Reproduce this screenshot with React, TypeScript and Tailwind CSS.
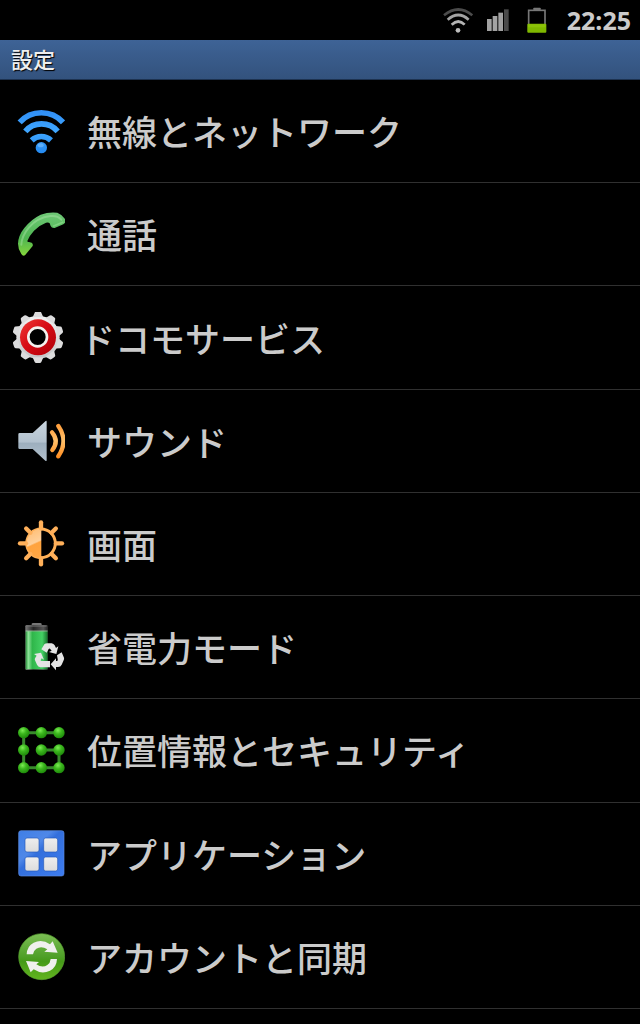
import type { ReactNode } from 'react';

function WifiIcon() {
  return (
    <svg viewBox="51 199 144 144" className="size-12" aria-hidden="true">
      <defs>
        <linearGradient id="wifi" x1="0" y1="205" x2="0" y2="340" gradientUnits="userSpaceOnUse">
          <stop offset="0" stopColor="#2f8df5" />
          <stop offset="0.5" stopColor="#3fa6ff" />
          <stop offset="1" stopColor="#2489f0" />
        </linearGradient>
      </defs>
      <g fill="none" stroke="url(#wifi)" strokeWidth="17">
        <path d="M59 245A88 88 0 0 1 189 245" />
        <path d="M76 272A64 64 0 0 1 173 272" />
        <path d="M95 299A42 42 0 0 1 153 299" />
      </g>
      <circle cx="124" cy="321" r="17" fill="url(#wifi)" />
      <ellipse cx="122" cy="314" rx="9" ry="6" fill="#8cc9ff" opacity="0.5" />
    </svg>
  );
}

function PhoneIcon() {
  return (
    <svg viewBox="51 45 144 144" className="size-12" aria-hidden="true">
      <defs>
        <linearGradient id="phone" x1="0" y1="52" x2="0" y2="182" gradientUnits="userSpaceOnUse">
          <stop offset="0" stopColor="#6fc877" />
          <stop offset="0.6" stopColor="#4fb552" />
          <stop offset="1" stopColor="#85d63c" />
        </linearGradient>
      </defs>
      <path
        d="M75 181Q68 184 64 177Q54 162 54 146Q55 121 73 99Q93 73 122 59Q146 50 172 53Q188 59 197 75Q198 83 190 88L164 99Q155 100 152 93L149 85Q146 81 138 83Q117 91 102 107Q88 122 82 138Q82 142 87 141L95 143Q100 147 98 153Z"
        fill="url(#phone)"
      />
      <path d="M64 149Q65 123 87 97Q112 68 151 63Q173 61 184 74" fill="none" stroke="#a5e2a2" strokeWidth="6" strokeLinecap="round" opacity="0.5" />
      <path d="M159 94L190 81" stroke="#9ce49a" strokeWidth="5" opacity="0.5" />
    </svg>
  );
}

const TEETH = [0, 36, 72, 108, 144, 180, 216, 252, 288, 324];

function DocomoIcon() {
  return (
    <svg viewBox="36 35 156 156" className="size-[52px]" aria-hidden="true">
      <defs>
        <linearGradient id="gear" x1="0" y1="33" x2="0" y2="189" gradientUnits="userSpaceOnUse">
          <stop offset="0" stopColor="#f6f6f6" />
          <stop offset="1" stopColor="#bfc1c3" />
        </linearGradient>
        <linearGradient id="ring" x1="60" y1="60" x2="160" y2="160" gradientUnits="userSpaceOnUse">
          <stop offset="0" stopColor="#ef3a36" />
          <stop offset="0.45" stopColor="#d80d16" />
          <stop offset="1" stopColor="#b40009" />
        </linearGradient>
      </defs>
      <circle cx="114" cy="111" r="65" fill="url(#gear)" />
      <g fill="#dcdcdd">
        {TEETH.map((angle) => (
          <path key={angle} d="M98 51L104 37Q105 34 109 34H119Q123 34 124 37L130 51Z" transform={`rotate(${angle} 114 111)`} />
        ))}
      </g>
      <circle cx="114" cy="111" r="54" fill="url(#ring)" />
      <circle cx="113" cy="110" r="28" fill="#000" stroke="#f4f1ee" strokeWidth="8" />
    </svg>
  );
}

function SoundIcon() {
  return (
    <svg viewBox="51 36 144 144" className="size-12" aria-hidden="true">
      <defs>
        <linearGradient id="speaker" x1="0" y1="48" x2="0" y2="168" gradientUnits="userSpaceOnUse">
          <stop offset="0" stopColor="#c9d5df" />
          <stop offset="0.52" stopColor="#b3c2cf" />
          <stop offset="0.56" stopColor="#9dafbe" />
          <stop offset="1" stopColor="#b2c0cd" />
        </linearGradient>
        <linearGradient id="waves" x1="0" y1="55" x2="0" y2="160" gradientUnits="userSpaceOnUse">
          <stop offset="0" stopColor="#ff9b38" />
          <stop offset="0.5" stopColor="#ffc06a" />
          <stop offset="1" stopColor="#ff8a1c" />
        </linearGradient>
      </defs>
      <path d="M59 84H98L137 48Q140 46 140 50V166Q140 170 136 167L98 132H59Q55 132 55 128V88Q55 84 59 84Z" fill="url(#speaker)" />
      <g fill="none" stroke="url(#waves)" strokeWidth="13" strokeLinecap="round">
        <path d="M156 82Q178 108 157 135" />
        <path d="M175 63Q206 108 175 154" />
      </g>
    </svg>
  );
}

const RAYS = [0, 45, 90, 135, 180, 225, 270, 315];

function DisplayIcon() {
  return (
    <svg viewBox="51 45 144 144" className="size-12" aria-hidden="true">
      <defs>
        <linearGradient id="sun" x1="80" y1="60" x2="130" y2="170" gradientUnits="userSpaceOnUse">
          <stop offset="0" stopColor="#ffb765" />
          <stop offset="0.48" stopColor="#ffd09a" />
          <stop offset="0.52" stopColor="#ffa33e" />
          <stop offset="1" stopColor="#ffa848" />
        </linearGradient>
      </defs>
      <circle cx="123" cy="115" r="43" fill="none" stroke="#ffb057" strokeWidth="9" />
      <path d="M124 71A44 44 0 0 0 124 159Z" fill="url(#sun)" />
      {RAYS.map((angle) => (
        <path key={angle} d="M123 70V52" stroke="#ffb05a" strokeWidth="13" strokeLinecap="round" transform={`rotate(${angle} 123 115)`} />
      ))}
    </svg>
  );
}

function PowerIcon() {
  return (
    <svg viewBox="51 39 144 144" className="size-12" aria-hidden="true">
      <defs>
        <linearGradient id="cell" x1="77" y1="0" x2="143" y2="0" gradientUnits="userSpaceOnUse">
          <stop offset="0" stopColor="#238f35" />
          <stop offset="0.12" stopColor="#8fe29a" />
          <stop offset="0.3" stopColor="#2fb64a" />
          <stop offset="0.75" stopColor="#43d063" />
          <stop offset="1" stopColor="#16702a" />
        </linearGradient>
        <linearGradient id="cap" x1="77" y1="0" x2="143" y2="0" gradientUnits="userSpaceOnUse">
          <stop offset="0" stopColor="#777" />
          <stop offset="0.35" stopColor="#252525" />
          <stop offset="0.8" stopColor="#555" />
          <stop offset="1" stopColor="#222" />
        </linearGradient>
      </defs>
      <path d="M95 46V41Q96 39 99 39H121Q124 39 125 41V46Z" fill="#777" />
      <rect x="76" y="45" width="68" height="135" rx="4" fill="url(#cap)" />
      <path d="M80 48H140" stroke="#777" strokeWidth="3" />
      <rect x="77" y="64" width="66" height="114" rx="2" fill="url(#cell)" />
      <path d="M77 63H143" stroke="#b7efbd" strokeWidth="2" />
      <g fill="#e4e4e4">
        <path d="M124 118L133 103Q136 100 142 100H155Q161 101 164 106L168 114L175 109L169 132L147 126L155 122L150 116Q148 114 146 117L140 128Z" />
        <path d="M171 136L185 127L192 143Q193 147 191 151L185 164Q182 171 174 171H168V181L152 163L168 145V153H171Q175 152 173 147Z" />
        <path d="M150 153V172H121Q114 171 111 164L105 151Q103 147 106 143L110 137L102 132L123 128L132 149L125 145L122 150Q121 153 125 153Z" />
      </g>
    </svg>
  );
}

const NODES: [number, number][] = [
  [71, 53], [124, 53], [177, 53],
  [71, 105], [124, 105], [177, 105],
  [71, 158], [124, 158], [177, 158],
];

function LocationIcon() {
  return (
    <svg viewBox="51 33 144 144" className="size-12" aria-hidden="true">
      <defs>
        <radialGradient id="node" cx="0.4" cy="0.3" r="0.7">
          <stop offset="0" stopColor="#7dec55" />
          <stop offset="0.45" stopColor="#3cb81e" />
          <stop offset="1" stopColor="#1e8a0a" />
        </radialGradient>
      </defs>
      <path d="M177 53H71V158H177V105H124" fill="none" stroke="#388a2c" strokeWidth="9" strokeLinejoin="round" />
      {NODES.map(([x, y]) => (
        <circle key={`${x}-${y}`} cx={x} cy={y} r="17" fill="url(#node)" />
      ))}
    </svg>
  );
}

function AppsIcon() {
  return (
    <svg viewBox="51 45 144 144" className="size-12" aria-hidden="true">
      <defs>
        <linearGradient id="tile" x1="60" y1="46" x2="190" y2="184" gradientUnits="userSpaceOnUse">
          <stop offset="0" stopColor="#3f7fe6" />
          <stop offset="0.35" stopColor="#4f88e8" />
          <stop offset="0.45" stopColor="#336fdc" />
          <stop offset="1" stopColor="#3d7cf0" />
        </linearGradient>
        <linearGradient id="pane" x1="0" y1="0" x2="0" y2="1">
          <stop offset="0" stopColor="#eeeeee" />
          <stop offset="1" stopColor="#dcdcdc" />
        </linearGradient>
      </defs>
      <rect x="56" y="47" width="136" height="136" rx="7" fill="url(#tile)" stroke="#5a8ade" strokeWidth="2" />
      <g fill="url(#pane)" stroke="#2459b8" strokeWidth="2">
        <rect x="75" y="69" width="42" height="42" rx="6" />
        <rect x="131" y="69" width="42" height="42" rx="6" />
        <rect x="75" y="126" width="42" height="42" rx="6" />
        <rect x="131" y="126" width="42" height="42" rx="6" />
      </g>
    </svg>
  );
}

function SyncIcon() {
  return (
    <svg viewBox="51 39 144 144" className="size-12" aria-hidden="true">
      <defs>
        <linearGradient id="disc" x1="0" y1="40" x2="0" y2="180" gradientUnits="userSpaceOnUse">
          <stop offset="0" stopColor="#7cbf55" />
          <stop offset="0.5" stopColor="#4f9f28" />
          <stop offset="0.6" stopColor="#459a18" />
          <stop offset="1" stopColor="#63b51f" />
        </linearGradient>
      </defs>
      <circle cx="125" cy="110" r="69" fill="url(#disc)" stroke="#5ba332" strokeWidth="2" />
      <g fill="#f0f0ee">
        <path d="M80 103Q81 78 101 68Q126 56 150 73L158 64L173 98L133 95L142 88Q124 76 109 86Q100 92 99 103Z" />
        <path d="M171 117Q170 142 150 152Q125 164 101 148L92 157L78 123L117 126L109 133Q127 145 142 135Q151 129 152 117Z" />
      </g>
    </svg>
  );
}

function StatusWifi() {
  return (
    <svg viewBox="36 21 90 75" className="h-[25px] w-[30px]" aria-hidden="true">
      <g fill="none" strokeWidth="8">
        <path d="M39 43Q82 8 124 43" stroke="#4c4c4c" />
        <path d="M50 56Q82 28 113 56" stroke="#a4a4a4" />
        <path d="M62 71Q82 52 101 71" stroke="#b4b4b4" />
      </g>
      <circle cx="81" cy="88" r="7" fill="#bdbdbd" />
    </svg>
  );
}

function StatusSignal() {
  return (
    <svg viewBox="168 30 66 66" className="size-[22px]" aria-hidden="true">
      <g fill="#a2a2a2">
        <rect x="168" y="60" width="14" height="36" />
        <rect x="185" y="51" width="14" height="45" />
        <rect x="202" y="41" width="14" height="55" />
      </g>
      <rect x="219" y="31" width="14" height="65" fill="#4a4a4a" />
    </svg>
  );
}

function StatusBattery() {
  return (
    <svg viewBox="291 21 60 78" className="h-[26px] w-5" aria-hidden="true">
      <rect x="310" y="23" width="22" height="8" rx="2" fill="#777" />
      <rect x="296" y="31" width="49" height="62" fill="none" stroke="#777" strokeWidth="5" />
      <rect x="292" y="71" width="57" height="27" rx="3" fill="#7fb800" />
      <rect x="294" y="73" width="53" height="9" fill="#8cc208" />
    </svg>
  );
}

const ITEMS: { label: string; icon: ReactNode; wide?: boolean }[] = [
  { label: '無線とネットワーク', icon: <WifiIcon /> },
  { label: '通話', icon: <PhoneIcon /> },
  { label: 'ドコモサービス', icon: <DocomoIcon />, wide: true },
  { label: 'サウンド', icon: <SoundIcon /> },
  { label: '画面', icon: <DisplayIcon /> },
  { label: '省電力モード', icon: <PowerIcon /> },
  { label: '位置情報とセキュリティ', icon: <LocationIcon /> },
  { label: 'アプリケーション', icon: <AppsIcon /> },
  { label: 'アカウントと同期', icon: <SyncIcon /> },
];

export default function App() {
  return (
    <div className="min-h-screen bg-black font-['Noto_Sans_CJK_JP',sans-serif] text-[#cbcbcb]">
      <div className="flex h-10 items-center justify-end pr-[9px]">
        <StatusWifi />
        <span className="ml-[14px] flex">
          <StatusSignal />
        </span>
        <span className="ml-[18px] flex">
          <StatusBattery />
        </span>
        <time className="ml-5 font-['Noto_Sans',sans-serif] text-[25px] leading-10 font-bold">22:25</time>
      </div>
      <header className="flex h-10 items-start border-b border-[#1d3250] bg-linear-to-b from-[#3e6396] to-[#33527d] px-[11px] pt-0.5">
        <h1 className="text-[22px] leading-8 font-medium text-[#eeeeee] [text-shadow:1px_1px_1px_#000]">設定</h1>
      </header>
      <main>
        <ul className="grid min-h-[929px] auto-rows-fr">
          {ITEMS.map(({ label, icon, wide }) => (
            <li key={label} className="border-b border-[#303030]">
              <button
                type="button"
                className={`flex h-full w-full items-center text-left ${wide ? 'gap-4 pl-3' : 'gap-[22px] pl-[17px]'}`}
              >
                <span className="shrink-0">{icon}</span>
                <span className="text-[35px] leading-[52px] font-medium">{label}</span>
              </button>
            </li>
          ))}
        </ul>
      </main>
    </div>
  );
}
